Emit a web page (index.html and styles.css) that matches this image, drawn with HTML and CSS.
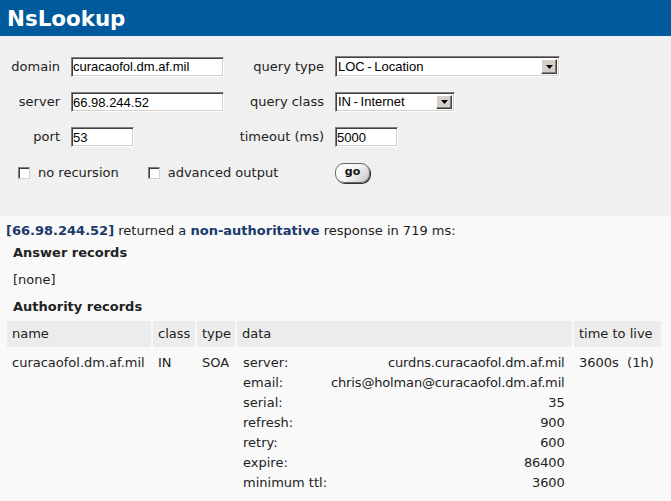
FILE: index.html
```html
<!DOCTYPE html>
<html>
<head>
<meta charset="utf-8">
<title>NsLookup</title>
<link rel="stylesheet" href="styles.css">
</head>
<body>
<div class="header"><h1 class="title">NsLookup</h1></div>
<form class="form">
  <label class="lbl">domain</label>
  <input class="field w-long" type="text" value="curacaofol.dm.af.mil">
  <label class="lbl">query type</label>
  <div class="sel sel-type"><span class="sel-text">LOC - Location</span><span class="sel-btn"><svg width="7" height="4" viewBox="0 0 7 4"><path d="M0 0h7L3.5 4z" fill="#000"/></svg></span></div>

  <label class="lbl">server</label>
  <input class="field w-long" type="text" value="66.98.244.52">
  <label class="lbl">query class</label>
  <div class="sel sel-class"><span class="sel-text">IN - Internet</span><span class="sel-btn"><svg width="7" height="4" viewBox="0 0 7 4"><path d="M0 0h7L3.5 4z" fill="#000"/></svg></span></div>

  <label class="lbl">port</label>
  <div class="cell-left"><input class="field w-short" type="text" value="53"></div>
  <label class="lbl">timeout (ms)</label>
  <div class="cell-left"><input class="field w-short" type="text" value="5000"></div>

  <div class="checks">
    <label class="chk"><span class="box"></span>no recursion</label>
    <label class="chk chk2"><span class="box"></span>advanced output</label>
  </div>
  <div class="cell-left"><button class="go" type="button">go</button></div>
</form>
<div class="results">
  <p class="summary"><b class="hl">[66.98.244.52]</b> returned a <b class="hl">non-authoritative</b> response in 719 ms:</p>
  <h3 class="sec">Answer records</h3>
  <p class="none">[none]</p>
  <h3 class="sec sec2">Authority records</h3>
  <table class="rec">
    <thead>
      <tr><th class="c-name">name</th><th class="c-class">class</th><th class="c-type">type</th><th class="c-data">data</th><th class="c-ttl">time to live</th></tr>
    </thead>
    <tbody>
      <tr>
        <td>curacaofol.dm.af.mil</td>
        <td>IN</td>
        <td>SOA</td>
        <td class="d-data">
          <table class="soa">
            <tr><td>server:</td><td class="v">curdns.curacaofol.dm.af.mil</td></tr>
            <tr><td>email:</td><td class="v">chris@holman@curacaofol.dm.af.mil</td></tr>
            <tr><td>serial:</td><td class="v">35</td></tr>
            <tr><td>refresh:</td><td class="v">900</td></tr>
            <tr><td>retry:</td><td class="v">600</td></tr>
            <tr><td>expire:</td><td class="v">86400</td></tr>
            <tr><td>minimum ttl:</td><td class="v">3600</td></tr>
          </table>
        </td>
        <td>3600s&nbsp;&nbsp;(1h)</td>
      </tr>
    </tbody>
  </table>
</div>
</body>
</html>
```
FILE: styles.css
```css
html, body {
  margin: 0;
  padding: 0;
}
body {
  background: #f9f9f9;
  color: #222;
  font-family: "DejaVu Sans", Verdana, sans-serif;
  font-size: 13px;
  line-height: 16px;
}
.header {
  background: #005a9c;
  height: 36px;
}
.title {
  margin: 0;
  padding: 0 0 0 7px;
  color: #fff;
  font-size: 21.4px;
  font-weight: bold;
  line-height: 38px;
}
.form {
  background: #f0f0f0;
  margin: 0;
  padding: 20px 0 33px 0;
  display: grid;
  grid-template-columns: 60px 153px 89px auto;
  column-gap: 11px;
  row-gap: 15px;
  align-items: center;
}
.lbl {
  text-align: right;
  color: #222;
}
.cell-left {
  display: flex;
  align-items: center;
}
.field {
  box-sizing: border-box;
  height: 20px;
  margin: 0;
  padding: 0 0 0 1px;
  border: 1px solid;
  border-color: #808080 #fff #fff #808080;
  box-shadow: inset 1px 1px #404040, inset -1px -1px #d4d0c8;
  background: #fff;
  font-family: "Liberation Sans", Arial, sans-serif;
  font-size: 13px;
  color: #000;
  outline: none;
}
.w-long { width: 153px; }
.w-short { width: 63px; }
.sel {
  box-sizing: border-box;
  height: 21px;
  display: flex;
  align-items: center;
  justify-content: space-between;
  border: 1px solid;
  border-color: #808080 #fff #fff #808080;
  box-shadow: inset 1px 1px #404040, inset -1px -1px #d4d0c8;
  background: #fff;
  padding: 2px;
  font-family: "Liberation Sans", Arial, sans-serif;
  font-size: 13px;
  color: #000;
}
.sel-type { width: 225px; }
.sel-class { width: 120px; height: 20px; }
.sel-text { padding-left: 0; word-spacing: -1px; }
.sel-btn {
  box-sizing: border-box;
  width: 16px;
  height: 100%;
  background: #d4d0c8;
  border: 1px solid;
  border-color: #fff #404040 #404040 #fff;
  box-shadow: inset -1px -1px #808080;
  display: flex;
  align-items: center;
  justify-content: center;
}
.checks {
  grid-column: 1 / span 3;
  display: flex;
  align-items: center;
  padding-left: 18px;
  margin-top: 1px;
}
.chk {
  display: flex;
  align-items: center;
  gap: 8px;
}
.chk2 { margin-left: 29px; }
.box {
  box-sizing: border-box;
  width: 12px;
  height: 12px;
  background: #fff;
  border: 1px solid;
  border-color: #808080 #d4d0c8 #d4d0c8 #808080;
  box-shadow: inset 1px 1px #404040;
}
.go {
  box-sizing: border-box;
  width: 35px;
  height: 20px;
  margin: 1px 0 0 0;
  padding: 0 0 2px 0;
  border: 1px solid #666;
  border-radius: 9px;
  background: linear-gradient(135deg, #ffffff 0%, #f4f4f4 50%, #c4c4c4 100%);
  box-shadow: 1px 1px 0 #333;
  font-family: "DejaVu Sans", Verdana, sans-serif;
  font-size: 11px;
  font-weight: bold;
  color: #111;
  line-height: 16px;
}
.results {
  padding: 7px 0 0 0;
}
.summary {
  margin: 0 0 0 6px;
}
.hl {
  color: #1b3a6c;
}
.sec {
  margin: 6px 0 0 13px;
  font-size: 13px;
  font-weight: bold;
  line-height: 16px;
}
.none {
  margin: 11px 0 0 13px;
}
.sec2 { margin-top: 11px; }
.rec {
  margin: 4px 0 0 5px;
  border-collapse: separate;
  border-spacing: 2px;
  table-layout: fixed;
  width: 658px;
}
.rec th {
  box-sizing: border-box;
  background: #ececec;
  font-weight: normal;
  text-align: left;
  padding: 5px 5px;
  height: 26px;
}
.c-name { width: 144px; }
.c-class { width: 42px; }
.c-type { width: 38px; }
.c-data { width: 335px; }
.c-ttl { width: 87px; }
.rec td {
  vertical-align: top;
  padding: 6px 4px 0 5px;
  white-space: nowrap;
}
.rec td.d-data {
  padding: 4px 0 0 4px;
}
.soa {
  border-collapse: collapse;
  width: 322px;
}
.soa td {
  padding: 2px 2px !important;
  line-height: 16px;
}
.soa td.v {
  text-align: right;
  letter-spacing: -0.15px;
}
```
